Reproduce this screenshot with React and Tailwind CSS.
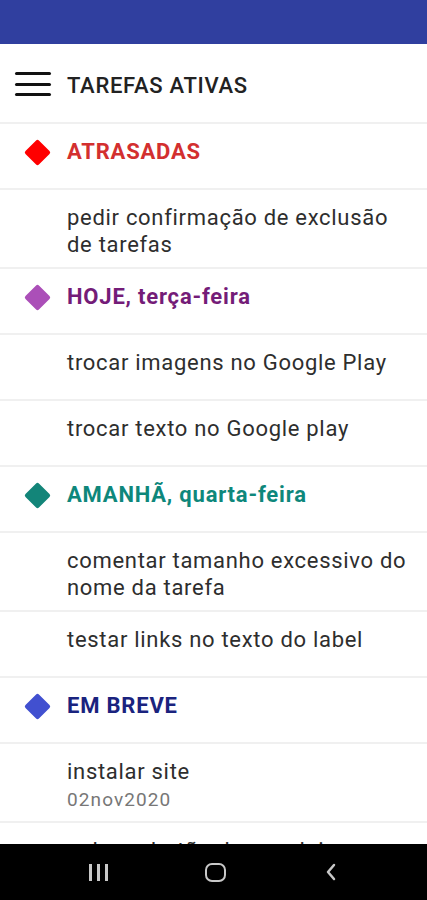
import React from "react";

const sections = [
  {
    title: "ATRASADAS",
    text: "text-[#d32f2f]",
    dot: "bg-[#ff0000]",
    tasks: [{ name: "pedir confirmação de exclusão de tarefas" }],
  },
  {
    title: "HOJE, terça-feira",
    text: "text-[#741c78]",
    dot: "bg-[#ab4fb8]",
    tasks: [{ name: "trocar imagens no Google Play" }, { name: "trocar texto no Google play" }],
  },
  {
    title: "AMANHÃ, quarta-feira",
    text: "text-[#0e877b]",
    dot: "bg-[#138579]",
    tasks: [{ name: "comentar tamanho excessivo do nome da tarefa" }, { name: "testar links no texto do label" }],
  },
  {
    title: "EM BREVE",
    text: "text-[#1a237e]",
    dot: "bg-[#4150d0]",
    tasks: [
      { name: "instalar site", date: "02nov2020" },
      { name: "colocar botão de concluir quando" },
    ],
  },
];

function Row({ children }) {
  return (
    <div className="min-h-[66px] border-b-2 border-[#f0f0f0] pt-[14px] pb-[9px] pl-[67px] pr-3">
      {children}
    </div>
  );
}

export default function App() {
  return (
    <div
      className="w-[427px] h-[900px] flex flex-col bg-white overflow-hidden"
      style={{ fontFamily: "Roboto, 'Noto Sans', sans-serif" }}
    >
      {/* status bar */}
      <div className="h-[44px] shrink-0 bg-[#303f9f]" />

      {/* toolbar */}
      <div className="h-[80px] shrink-0 flex items-center border-b-2 border-[#f0f0f0]">
        <div className="w-[36px] ml-[15px] mt-[2px] flex flex-col gap-[7.5px]">
          <span className="h-[3px] rounded-full bg-[#111]" />
          <span className="h-[3px] rounded-full bg-[#111]" />
          <span className="h-[3px] rounded-full bg-[#111]" />
        </div>
        <h1 className="ml-[16px] mt-[4px] text-[22px] font-medium text-[#222] tracking-[0.7px]">TAREFAS ATIVAS</h1>
      </div>

      {/* list */}
      <div className="flex-1 overflow-hidden">
        {sections.map((s) => (
          <div key={s.title}>
            <div className="relative min-h-[66px] border-b-2 border-[#f0f0f0] pt-[14px] pb-[9px] pl-[67px]">
              <span
                className={`absolute left-[28px] top-[19px] w-[19px] h-[19px] rotate-45 rounded-[2px] ${s.dot}`}
              />
              <p className={`text-[22px] leading-[27px] font-bold tracking-[0.8px] ${s.text}`}>{s.title}</p>
            </div>
            {s.tasks.map((t) => (
              <Row key={t.name}>
                <p className="text-[22px] leading-[27px] tracking-[0.7px] text-[#2e2e2e]">{t.name}</p>
                {t.date && <p className="mt-[3px] text-[19px] leading-[24px] tracking-[1.1px] text-[#777]">{t.date}</p>}
              </Row>
            ))}
          </div>
        ))}
      </div>

      {/* nav bar */}
      <div className="h-[56px] shrink-0 bg-black flex items-center justify-around px-[40px]">
        <div className="flex gap-[5px] h-[17px]">
          <span className="w-[3px] bg-[#c8c8c8]" />
          <span className="w-[3px] bg-[#c8c8c8]" />
          <span className="w-[3px] bg-[#c8c8c8]" />
        </div>
        <div className="w-[21px] h-[19px] rounded-[7px] border-[2.5px] border-[#c8c8c8]" />
        <svg width="14" height="20" viewBox="0 0 14 20">
          <path d="M10 3 L4 10 L10 17" fill="none" stroke="#c8c8c8" strokeWidth="2.5" strokeLinecap="round" strokeLinejoin="round" />
        </svg>
      </div>
    </div>
  );
}
